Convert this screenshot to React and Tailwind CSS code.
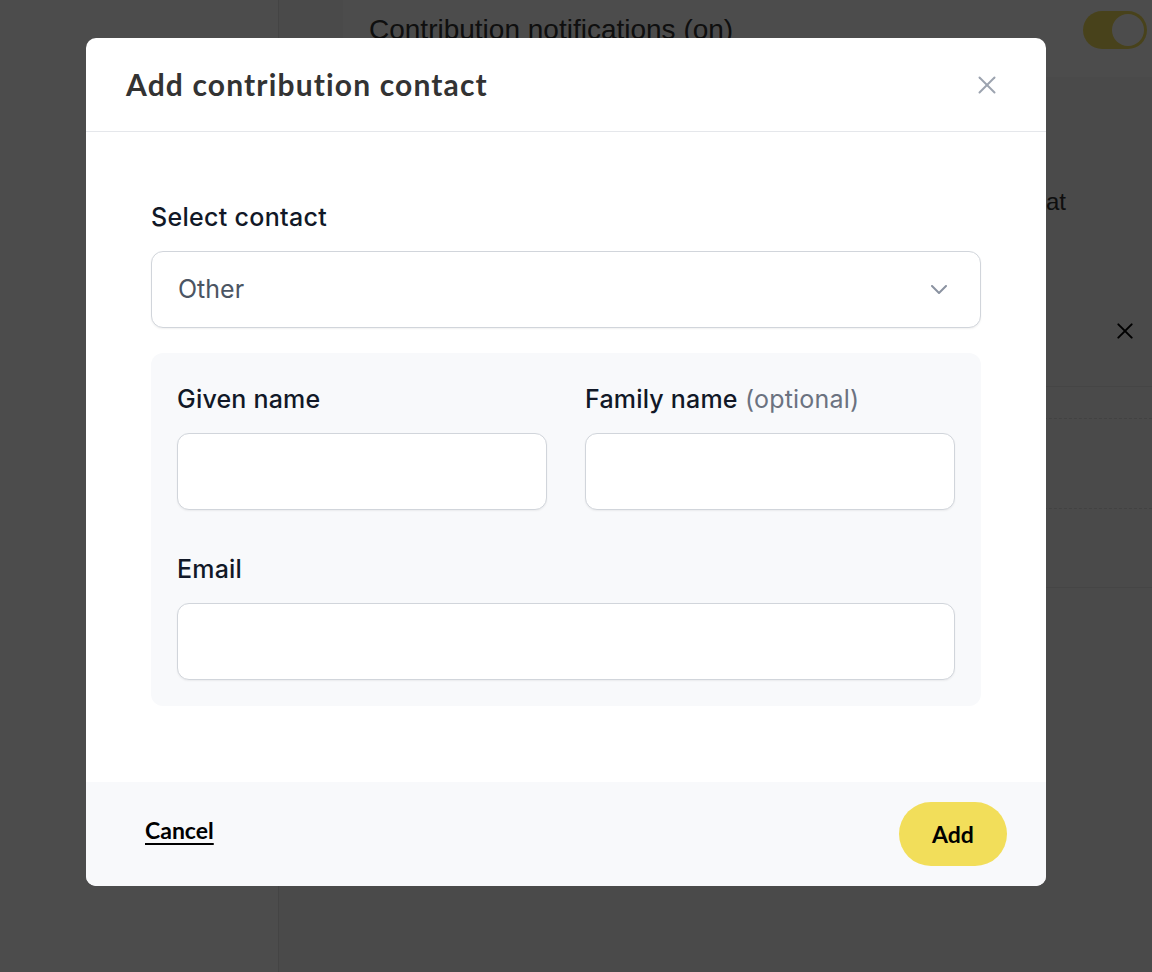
import React from "react";

function CloseIcon({ className, stroke = "currentColor", w = 2 }) {
  return (
    <svg className={className} viewBox="0 0 18 18" fill="none" stroke={stroke} strokeWidth={w} strokeLinecap="round">
      <line x1="1.5" y1="1.5" x2="16.5" y2="16.5" />
      <line x1="16.5" y1="1.5" x2="1.5" y2="16.5" />
    </svg>
  );
}

function Field({ label, optional, className = "" }) {
  return (
    <div className={"flex flex-col " + className}>
      <div className="h-[31px] leading-[31px] text-[25px] tracking-[0.2px] font-medium text-[#111827]">
        {label}
        {optional && <span className="font-normal text-[#6b7280]"> (optional)</span>}
      </div>
      <div className="mt-[18px] h-[77px] rounded-[12px] border border-[#d1d5db] bg-white shadow-[0_1px_2px_rgba(0,0,0,0.06)]" />
    </div>
  );
}

export default function App() {
  return (
    <div className="relative w-[1152px] h-[972px] overflow-hidden bg-white" style={{ fontFamily: "Inter, 'Noto Sans', sans-serif" }}>
      {/* Page behind */}
      <div className="flex h-full">
        <aside className="w-[279px] shrink-0 border-r border-[#e5e5e5] bg-white" />
        <main className="flex-1 bg-[#f7f7f7] pl-[64px]">
          <div className="flex h-[77px] items-start justify-between bg-white pl-[26px] pr-[5px]">
            <div className="mt-[12px] text-[28px] leading-[36px] text-[#333]" style={{ fontFamily: "'Liberation Sans', Arial, sans-serif" }}>
              Contribution notifications (on)
            </div>
            <div className="mt-[11px] flex h-[38px] w-[64px] items-center justify-end rounded-full bg-[#f2de5a] pr-[3px]">
              <div className="h-[32px] w-[32px] rounded-full bg-white" />
            </div>
          </div>
          <div className="h-[110px]" />
          <div className="h-[30px] pl-[703px] text-[24px] leading-[30px] text-[#333]" style={{ fontFamily: "'Liberation Sans', Arial, sans-serif" }}>
            at
          </div>
          <div className="h-[58px]" />
          <div className="flex h-[112px] items-center justify-end border-b border-[#e8e8e8] pr-[19px]">
            <CloseIcon className="h-[16px] w-[16px]" stroke="#000" w={2.2} />
          </div>
          <div className="h-[32px] border-b border-dashed border-[#dcdcdc]" />
          <div className="h-[90px] border-b border-dashed border-[#dcdcdc]" />
          <div className="h-[79px] border-b border-[#e8e8e8]" />
        </main>
      </div>

      {/* Overlay */}
      <div className="absolute inset-0 bg-black/70" />

      {/* Modal */}
      <div className="absolute left-[86px] top-[38px] flex h-[848px] w-[960px] flex-col overflow-hidden rounded-[10px] bg-white">
        <header className="flex h-[94px] shrink-0 items-center justify-between border-b border-[#e5e7eb] pl-[40px] pr-[50px]">
          <h2 className="text-[30px] font-bold tracking-[1.15px] text-[#333]" style={{ fontFamily: "Lato, 'Open Sans', sans-serif" }}>
            Add contribution contact
          </h2>
          <button className="text-[#9ca3af]">
            <CloseIcon className="h-[18px] w-[18px]" w={2} />
          </button>
        </header>

        <div className="flex-1 px-[65px] pt-[70px]">
          <div className="h-[31px] text-[25px] tracking-[0.3px] font-medium leading-[31px] text-[#111827]">Select contact</div>
          <div className="mt-[18px] flex h-[77px] items-center justify-between rounded-[12px] border border-[#d1d5db] bg-white pl-[26px] pr-[33px] shadow-[0_1px_2px_rgba(0,0,0,0.06)]">
            <span className="text-[25px] text-[#4b5563]">Other</span>
            <svg width="16" height="9" viewBox="0 0 16 9" fill="none" stroke="#8b93a1" strokeWidth="2" strokeLinecap="round" strokeLinejoin="round">
              <polyline points="1,1 8,8 15,1" />
            </svg>
          </div>

          <div className="mt-[25px] rounded-[12px] bg-[#f8f9fb] px-[26px] pb-[26px] pt-[31px]">
            <div className="grid grid-cols-2 gap-x-[38px]">
              <Field label="Given name" />
              <Field label="Family name" optional />
            </div>
            <Field label="Email" className="mt-[44px]" />
          </div>
        </div>

        <footer className="flex h-[104px] shrink-0 items-center justify-between bg-[#f8f9fb] pl-[59px] pr-[39px]" style={{ fontFamily: "Lato, 'Open Sans', sans-serif" }}>
          <button className="-mt-[8px] text-[23px] font-bold text-black underline underline-offset-[4px] decoration-[2px]">Cancel</button>
          <button className="h-[64px] w-[108px] rounded-full bg-[#f2de5a] text-[23px] font-bold text-black">Add</button>
        </footer>
      </div>
    </div>
  );
}
